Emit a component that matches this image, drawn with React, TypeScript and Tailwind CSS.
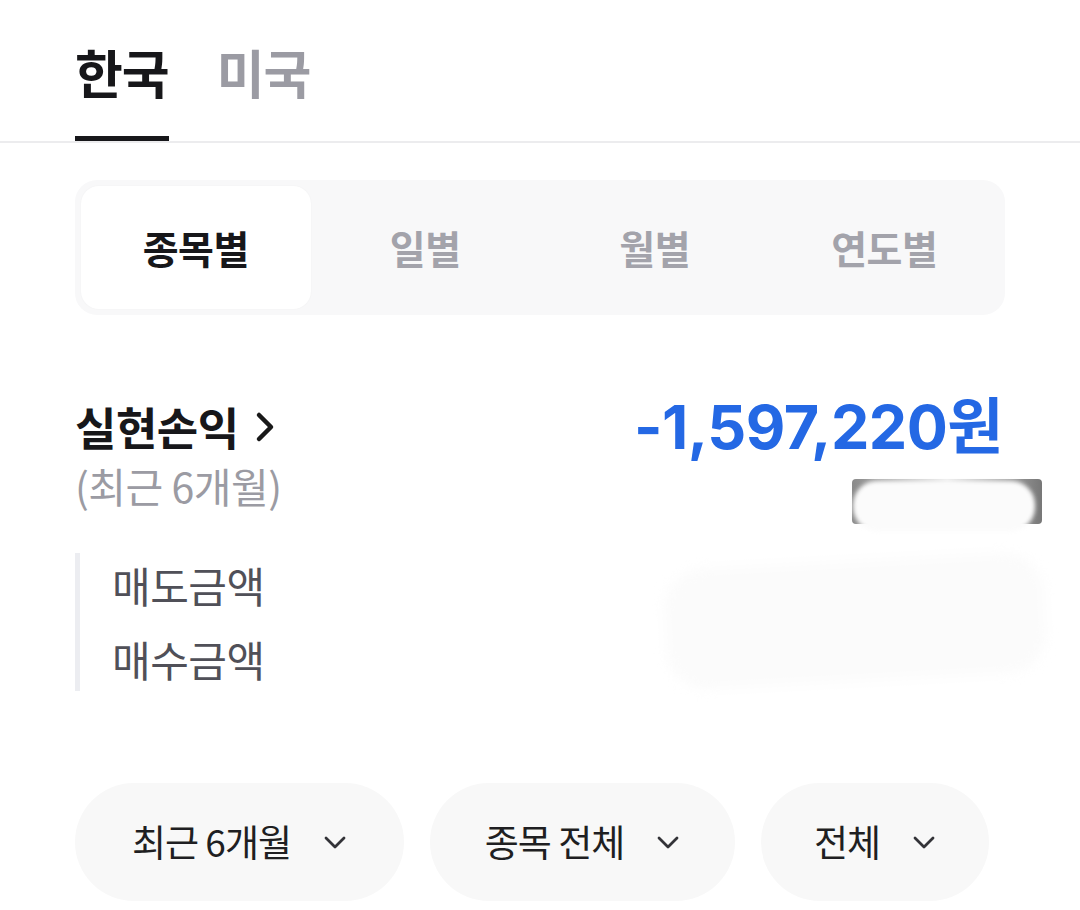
import { useState } from 'react'

const FONT = "font-['Noto_Sans_CJK_KR','Noto_Sans',sans-serif]"

function ChevronDown() {
  return (
    <svg width="24" height="15" viewBox="0 0 24 15" fill="none" className="shrink-0">
      <path d="M3 3l9 9 9-9" stroke="#333338" strokeWidth="2.8" strokeLinecap="round" strokeLinejoin="round" />
    </svg>
  )
}

function ChevronRight() {
  return (
    <svg width="22" height="32" viewBox="0 0 22 32" fill="none" className="shrink-0">
      <path d="M5 4l12 12-12 12" stroke="#191919" strokeWidth="4.5" strokeLinecap="round" strokeLinejoin="round" />
    </svg>
  )
}

const periods = ['종목별', '일별', '월별', '연도별']
const filters = [
  { label: '최근 6개월', width: 'w-[329px]' },
  { label: '종목 전체', width: 'w-[305px]' },
  { label: '전체', width: 'w-[228px]' },
]

export default function App() {
  const [market, setMarket] = useState(0)
  const [period, setPeriod] = useState(0)

  return (
    <div className={`${FONT} min-h-[910px] w-[1080px] overflow-hidden bg-white`}>
      {/* market tabs */}
      <div className="border-b-2 border-[#ececee] px-[75px] pt-[38px]">
        <div className="flex gap-[48px]">
          {['한국', '미국'].map((m, i) => (
            <button
              key={m}
              onClick={() => setMarket(i)}
              className={`flex flex-col items-center text-[52px] leading-[68px] font-bold ${
                i === market ? 'text-[#17171a]' : 'text-[#9b9ba3]'
              }`}
            >
              <span className="pb-[30px] tracking-[-1px]">{m}</span>
              <span className={`block h-[5px] w-full ${i === market ? 'bg-[#17171a]' : 'bg-transparent'}`} />
            </button>
          ))}
        </div>
      </div>

      {/* period segmented control */}
      <div className="px-[75px] pt-[37px]">
        <div className="grid grid-cols-4 rounded-[22px] bg-[#f8f8f9] p-[6px]">
          {periods.map((p, i) => (
            <button
              key={p}
              onClick={() => setPeriod(i)}
              className={`flex h-[123px] items-center justify-center rounded-[18px] text-[39px] font-bold tracking-[-0.5px] ${
                i === period ? 'bg-white text-[#17171a] shadow-[0_0_2px_rgba(0,0,0,0.04)]' : 'text-[#a3a3ab]'
              }`}
            >
              {p}
            </button>
          ))}
        </div>
      </div>

      {/* realized profit */}
      <div className="px-[75px] pt-[80px]">
        <div className="flex items-start justify-between">
          <div>
            <div className="flex items-center gap-[15px]">
              <span className="text-[45px] leading-[64px] font-bold tracking-[-0.5px] text-[#17171a]">실현손익</span>
              <ChevronRight />
            </div>
            <div className="text-[41px] leading-[52px] tracking-[-0.5px] text-[#9b9ba3]">(최근 6개월)</div>
          </div>
          <div className="relative pr-[2px]">
            <div className="font-['Inter','Noto_Sans_CJK_KR',sans-serif] text-[61px] leading-[64px] font-bold tracking-[-0.5px] text-[#2468e4]">
              -1,597,220원
            </div>
            {/* smudged-out area */}
            <div className="absolute top-[84px] right-[-37px] h-[45px] w-[190px] rounded-[4px] bg-gradient-to-r from-[#8a8a8a] via-[#ececec] to-[#777]" />
            <div className="absolute top-[86px] right-[-30px] h-[50px] w-[182px] rounded-[24px] bg-[#fbfbfb] blur-[2px]" />
          </div>
        </div>

        <div className="relative mt-[42px] flex border-l-[5px] border-[#ecedf1] py-[4px] pl-[32px]">
          <div className="flex flex-col gap-[18px] text-[42px] leading-[56px] tracking-[-0.5px] text-[#505058]">
            <span>매도금액</span>
            <span>매수금액</span>
          </div>
          <div className="absolute top-[8px] right-[-40px] h-[120px] w-[380px] -rotate-3 rounded-[40px] bg-[#fbfbfb] blur-[6px]" />
        </div>
      </div>

      {/* filter chips */}
      <div className="flex gap-[26px] px-[75px] pt-[92px]">
        {filters.map((f) => (
          <button
            key={f.label}
            className={`${f.width} flex h-[118px] items-center justify-center gap-[32px] rounded-full bg-[#f8f8f8] text-[37px] tracking-[-1px] text-[#1f1f22]`}
          >
            <span>{f.label}</span>
            <ChevronDown />
          </button>
        ))}
      </div>
    </div>
  )
}
